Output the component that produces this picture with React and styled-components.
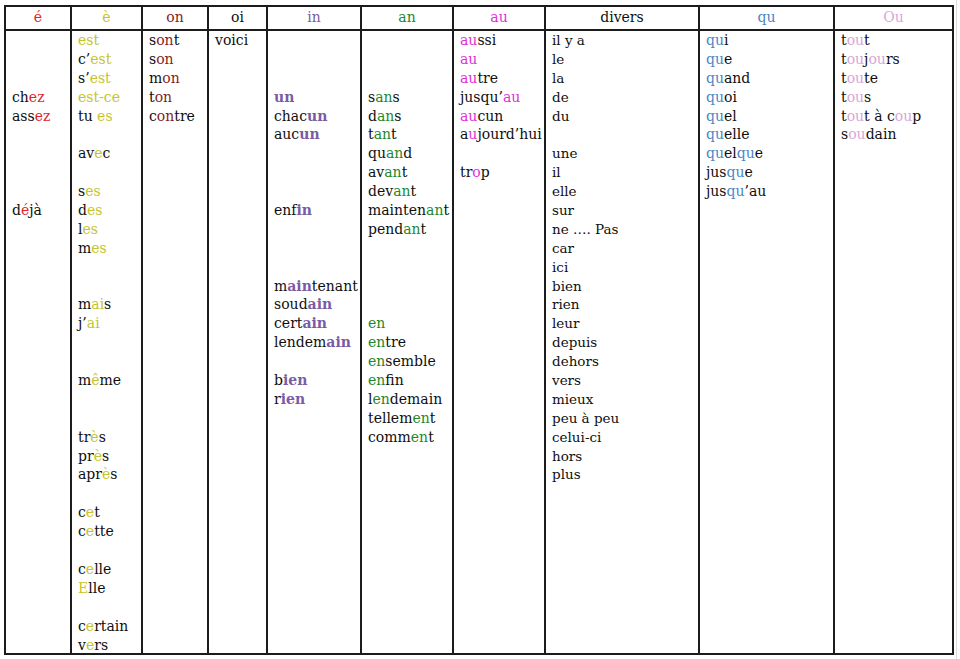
import React from "react";
import styled, { createGlobalStyle } from "styled-components";

const GlobalStyle = createGlobalStyle`
  html, body {
    margin: 0;
    background: #ffffff;
  }
  body {
    font-family: "DejaVu Serif", "Liberation Serif", serif;
    color: #0f0f0f;
  }
`;

const LINES = 33;

// each column: header, accent colour, width, and sparse lines (row index -> text, [..] = coloured part)
const columns = [
  {
    head: "é",
    color: "#e3262d",
    width: 66,
    lines: { 3: "ch[ez]", 4: "ass[ez]", 9: "d[é]jà" },
  },
  {
    head: "è",
    color: "#c6c42c",
    width: 71,
    lines: {
      0: "[est]",
      1: "c’[est]",
      2: "s’[est]",
      3: "[est-ce]",
      4: "tu [es]",
      6: "av[e]c",
      8: "s[es]",
      9: "d[es]",
      10: "l[es]",
      11: "m[es]",
      14: "m[ai]s",
      15: "j’[ai]",
      18: "m[ê]me",
      21: "tr[è]s",
      22: "pr[è]s",
      23: "apr[è]s",
      25: "c[e]t",
      26: "c[e]tte",
      28: "c[e]lle",
      29: "[E]lle",
      31: "c[e]rtain",
      32: "v[e]rs",
    },
  },
  {
    head: "on",
    color: "#861c1c",
    width: 66,
    lines: { 0: "s[on]t", 1: "s[on]", 2: "m[on]", 3: "t[on]", 4: "c[on]tre" },
  },
  { head: "oi", color: "#0f0f0f", width: 59, lines: { 0: "voici" } },
  {
    head: "in",
    color: "#7b5ba3",
    width: 94,
    bold: true,
    lines: {
      3: "[un]",
      4: "chac[un]",
      5: "auc[un]",
      9: "enf[in]",
      13: "m[ain]tenant",
      14: "soud[ain]",
      15: "cert[ain]",
      16: "lendem[ain]",
      18: "b[ien]",
      19: "r[ien]",
    },
  },
  {
    head: "an",
    color: "#23882a",
    width: 92,
    lines: {
      3: "s[an]s",
      4: "d[an]s",
      5: "t[an]t",
      6: "qu[an]d",
      7: "av[an]t",
      8: "dev[an]t",
      9: "mainten[an]t",
      10: "pend[an]t",
      15: "[en]",
      16: "[en]tre",
      17: "[en]semble",
      18: "[en]fin",
      19: "l[en]demain",
      20: "tellem[en]t",
      21: "comm[en]t",
    },
  },
  {
    head: "au",
    color: "#e12fd6",
    width: 92,
    lines: {
      0: "[au]ssi",
      1: "[au]",
      2: "[au]tre",
      3: "jusqu’[au]",
      4: "[au]cun",
      5: "a[u]jourd’hui",
      7: "tr[o]p",
    },
  },
  {
    head: "divers",
    color: "#0f0f0f",
    width: 154,
    narrow: true,
    lines: {
      0: "il y a",
      1: "le",
      2: "la",
      3: "de",
      4: "du",
      6: "une",
      7: "il",
      8: "elle",
      9: "sur",
      10: "ne …. Pas",
      11: "car",
      12: "ici",
      13: "bien",
      14: "rien",
      15: "leur",
      16: "depuis",
      17: "dehors",
      18: "vers",
      19: "mieux",
      20: "peu à peu",
      21: "celui-ci",
      22: "hors",
      23: "plus",
    },
  },
  {
    head: "qu",
    color: "#4a86c6",
    width: 135,
    lines: {
      0: "[qu]i",
      1: "[qu]e",
      2: "[qu]and",
      3: "[qu]oi",
      4: "[qu]el",
      5: "[qu]elle",
      6: "[qu]el[qu]e",
      7: "jus[qu]e",
      8: "jus[qu]’au",
    },
  },
  {
    head: "Ou",
    color: "#d9a6d8",
    width: 117,
    last: true,
    lines: {
      0: "t[ou]t",
      1: "t[ou]j[ou]rs",
      2: "t[ou]te",
      3: "t[ou]s",
      4: "t[ou]t à c[ou]p",
      5: "s[ou]dain",
    },
  },
];

function renderWord(text, color, bold) {
  const parts = text.split(/(\[[^\]]+\])/).filter(Boolean);
  return parts.map((p, i) =>
    p.startsWith("[") ? (
      <Mark key={i} $color={color} $bold={bold}>
        {p.slice(1, -1)}
      </Mark>
    ) : (
      <React.Fragment key={i}>{p}</React.Fragment>
    )
  );
}

export default function App() {
  const template = columns.map((c) => `${c.width}px`).join(" ");
  return (
    <Page>
      <GlobalStyle />
      <Table $cols={template}>
        {columns.map((c) => (
          <HeadCell key={c.head} $color={c.color} $last={c.last}>
            {c.head}
          </HeadCell>
        ))}
        {columns.map((c) => (
          <BodyCell key={c.head} $last={c.last} $narrow={c.narrow}>
            {Array.from({ length: LINES }, (_, i) => (
              <Line key={i}>{c.lines[i] ? renderWord(c.lines[i], c.color, c.bold) : ""}</Line>
            ))}
          </BodyCell>
        ))}
      </Table>
    </Page>
  );
}

const Page = styled.div`
  width: 957px;
  height: 659px;
  padding: 5px 0 0 4px;
  box-sizing: border-box;
  border-right: 1px solid #dcdcdc;
  overflow: hidden;
`;

const Table = styled.div`
  display: grid;
  grid-template-columns: ${(p) => p.$cols};
  grid-template-rows: 24px 1fr;
  width: 950px;
  height: 650px;
  box-sizing: border-box;
  border: 2px solid #1c1c1c;
  overflow: hidden;
`;

const HeadCell = styled.div`
  display: flex;
  align-items: center;
  justify-content: center;
  box-sizing: border-box;
  border-bottom: 2px solid #1c1c1c;
  border-right: ${(p) => (p.$last ? "none" : "2px solid #1c1c1c")};
  color: ${(p) => p.$color};
  font-size: 14px;
  padding-bottom: 2px;
`;

const BodyCell = styled.div`
  box-sizing: border-box;
  border-right: ${(p) => (p.$last ? "none" : "2px solid #1c1c1c")};
  padding-left: 6px;
  font-size: ${(p) => (p.$narrow ? "13.5px" : "14px")};
  overflow: hidden;
`;

const Line = styled.div`
  height: 18.9px;
  line-height: 18.9px;
  white-space: nowrap;
`;

const Mark = styled.span`
  color: ${(p) => p.$color};
  font-weight: ${(p) => (p.$bold ? 700 : "inherit")};
`;
